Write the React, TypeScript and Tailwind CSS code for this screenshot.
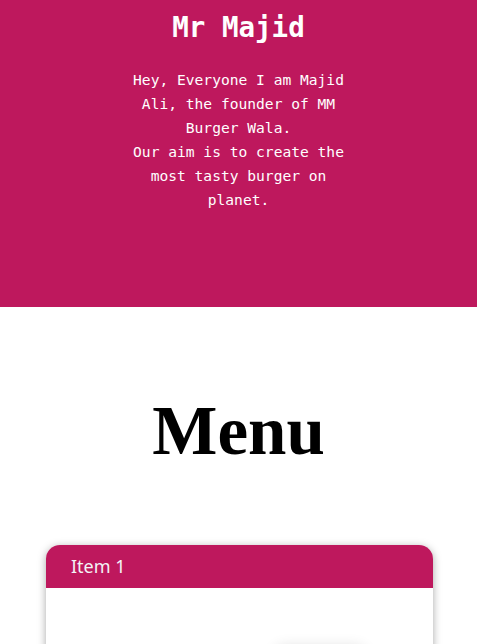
import React from "react";

const App = () => {
  return (
    <div className="min-h-screen w-full bg-white">
      <section className="flex flex-col items-center bg-[#be185d] pt-[11px] pb-[95px] text-white">
        <h1 className="font-['DejaVu_Sans_Mono','Liberation_Mono',monospace] text-[27.5px] leading-[33px] font-bold">
          Mr Majid
        </h1>
        <p className="mt-[24px] w-[240px] text-center font-['DejaVu_Sans_Mono','Liberation_Mono',monospace] text-[14.6px] leading-[24px]">
          Hey, Everyone I am Majid Ali, the founder of MM Burger Wala.
          <br />
          Our aim is to create the most tasty burger on planet.
        </p>
      </section>

      <section className="flex flex-col items-center pt-[90px]">
        <h2 className="font-['Liberation_Serif','Times_New_Roman',serif] text-[69px] leading-[69px] font-bold text-black">
          Menu
        </h2>
        <div className="mt-[79px] ml-[46px] w-[387px] self-start overflow-hidden rounded-[14px] bg-white shadow-[0_2px_8px_rgba(0,0,0,0.35)]">
          <div className="flex h-[43px] items-center bg-[#be185d] px-[25px]">
            <span className="font-['Noto_Sans',sans-serif] text-[18px] text-[#f3f4f6]">
              Item 1
            </span>
          </div>
          <div className="flex h-[200px] justify-start pl-[228px] pt-[62px]">
            <div className="h-[120px] w-[92px] rounded-[10px] bg-white shadow-[0_-4px_14px_rgba(0,0,0,0.12)]" />
          </div>
        </div>
      </section>
    </div>
  );
};

export default App;
